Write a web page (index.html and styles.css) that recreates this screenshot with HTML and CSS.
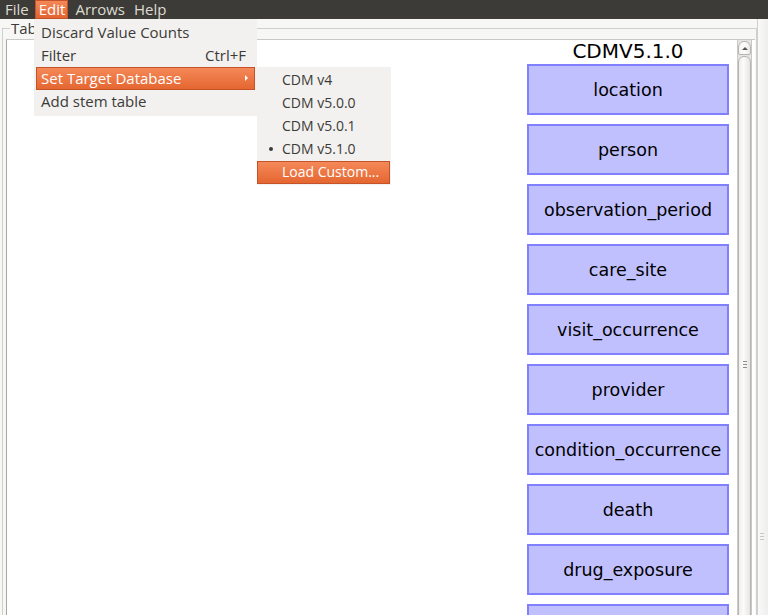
FILE: index.html
```html
<!DOCTYPE html>
<html>
<head>
<meta charset="utf-8">
<link rel="stylesheet" href="styles.css">
</head>
<body>
<div class="menubar">
  <span class="mitem">File</span>
  <span class="mitem active">Edit</span>
  <span class="mitem">Arrows</span>
  <span class="mitem">Help</span>
</div>
<div class="workspace">
  <div class="frame">
    <fieldset class="titled">
      <legend class="title">Tables</legend>
      <div class="panel">
        <div class="canvas">
          <div class="column">
            <div class="heading">CDMV5.1.0</div>
            <div class="box">location</div>
            <div class="box">person</div>
            <div class="box">observation_period</div>
            <div class="box">care_site</div>
            <div class="box">visit_occurrence</div>
            <div class="box">provider</div>
            <div class="box">condition_occurrence</div>
            <div class="box">death</div>
            <div class="box">drug_exposure</div>
            <div class="box tail"></div>
          </div>
        </div>
        <div class="vscroll">
          <div class="sbtn"><span class="uparrow"></span></div>
          <div class="thumb"><span class="grip"></span></div>
        </div>
      </div>
    </fieldset>
  </div>
  <div class="outer-scroll"><span class="grip2"></span></div>
</div>

<div class="menu editmenu">
  <div class="row"><span>Discard Value Counts</span></div>
  <div class="row"><span>Filter</span><span class="accel">Ctrl+F</span></div>
  <div class="row hl"><span>Set Target Database</span><span class="arrow"></span></div>
  <div class="row"><span>Add stem table</span></div>
</div>
<div class="menu submenu">
  <div class="row sub"><span class="bullet"></span><span>CDM v4</span></div>
  <div class="row sub"><span class="bullet"></span><span>CDM v5.0.0</span></div>
  <div class="row sub"><span class="bullet"></span><span>CDM v5.0.1</span></div>
  <div class="row sub"><span class="bullet on"></span><span>CDM v5.1.0</span></div>
  <div class="row sub hl"><span class="bullet"></span><span>Load Custom...</span></div>
</div>
</body>
</html>
```
FILE: styles.css
```css
* { box-sizing: border-box; }
html, body { margin: 0; padding: 0; }
body {
  width: 768px;
  height: 615px;
  overflow: hidden;
  background: #f7f7f6;
  font-family: "Open Sans", "Liberation Sans", sans-serif;
  position: relative;
}
.menubar {
  height: 19px;
  background: #3c3b37;
  display: flex;
  align-items: stretch;
}
.mitem {
  color: #dfdbd2;
  font-size: 15px;
  line-height: 18px;
  padding: 0 4px 0 5px;
}
.mitem.active {
  background: linear-gradient(#f58a5a, #e2622f);
  color: #ffffff;
  box-shadow: inset 0 0 0 1px #c4532a;
  margin-left: 2px;
  margin-right: 2px;
  padding: 0 3px 0 4px;
}
.workspace {
  display: flex;
  height: 596px;
}
.frame {
  width: 757px;
  padding: 2px 0 0 2px;
}
.titled {
  margin: 0;
  padding: 0 1px 0 3px;
  border: 1px solid #cfcfcd;
  border-bottom: none;
  height: 600px;
  min-width: 0;
}
.title {
  font-size: 15px;
  color: #3c3b37;
  padding: 0 1px;
  margin-left: 4px;
  line-height: 14px;
}
.panel {
  margin-top: 4px;
  display: flex;
  height: 580px;
  border-left: 1px solid #a7a7a2;
  border-top: 1px solid #c9c9c6;
  background: #ffffff;
}
.canvas {
  width: 731px;
  border-right: 1px solid #c9c9c6;
  overflow: hidden;
}
.column {
  margin-left: 520px;
  width: 202px;
  display: flex;
  flex-direction: column;
  gap: 9px;
}
.heading {
  font-family: "DejaVu Sans", sans-serif;
  font-size: 20px;
  text-align: center;
  line-height: 22px;
  height: 15px;
  color: #000;
}
.box {
  height: 51px;
  flex: none;
  border: 2px solid #8080ff;
  background: #c0c0ff;
  font-family: "DejaVu Sans", sans-serif;
  font-size: 17.5px;
  color: #000;
  display: flex;
  align-items: center;
  justify-content: center;
  padding-top: 1px;
}
.vscroll {
  width: 14px;
  display: flex;
  flex-direction: column;
  background: #e6e5e3;
  border-right: 1px solid #c9c9c6;
}
.sbtn {
  height: 14px;
  margin-top: 1px;
  background: linear-gradient(90deg, #f3f3f2, #fdfdfd, #e9e8e6);
  border: 1px solid #b6b5b1;
  border-radius: 6px 6px 2px 2px;
  display: flex;
  align-items: center;
  justify-content: center;
}
.uparrow {
  width: 0; height: 0;
  border-left: 3px solid transparent;
  border-right: 3px solid transparent;
  border-bottom: 3px solid #55554f;
}
.thumb {
  flex: 1;
  margin-top: 1px;
  background: linear-gradient(90deg, #eeeeed, #fbfbfb 40%, #e6e5e3);
  border: 1px solid #b6b5b1;
  border-radius: 6px 6px 0 0;
  position: relative;
}
.grip {
  position: absolute;
  left: 4px;
  top: 304px;
  width: 4px;
  height: 7px;
  background: repeating-linear-gradient(#8e8d89 0 1px, transparent 1px 3px);
}
.outer-scroll {
  flex: 1;
  border-left: 1px solid #cfcfcd;
  background: linear-gradient(90deg, #f9f9f9, #efeeed);
  position: relative;
}
.grip2 {
  position: absolute;
  left: 2px;
  top: 514px;
  width: 4px;
  height: 7px;
  background: repeating-linear-gradient(#c8c7c3 0 1px, transparent 1px 3px);
}
.menu {
  position: absolute;
  background: #f2f1f0;
  font-size: 15px;
  color: #3c3b37;
}
.editmenu {
  left: 34px;
  top: 19px;
  width: 223px;
  padding: 2px 2px 3px 2px;
}
.submenu {
  left: 257px;
  top: 67px;
  width: 134px;
  padding: 2px 1px 1px 0;
}
.row {
  height: 23px;
  display: flex;
  align-items: center;
  justify-content: space-between;
  padding: 0 9px 2px 5px;
}
.row.hl {
  background: linear-gradient(#f58a5a, #e4652f);
  box-shadow: inset 0 0 0 1px #c4532a;
  color: #ffffff;
}
.accel { color: #3c3b37; }
.arrow {
  width: 0; height: 0;
  border-top: 3px solid transparent;
  border-bottom: 3px solid transparent;
  border-left: 3px solid #ffffff;
  margin-right: -2px;
}
.row.sub {
  justify-content: flex-start;
  padding-left: 12px;
  gap: 9px;
  font-size: 14px;
}
.bullet {
  width: 4px;
  height: 4px;
  border-radius: 50%;
  flex: none;
}
.bullet.on { background: #3c3b37; }
```
